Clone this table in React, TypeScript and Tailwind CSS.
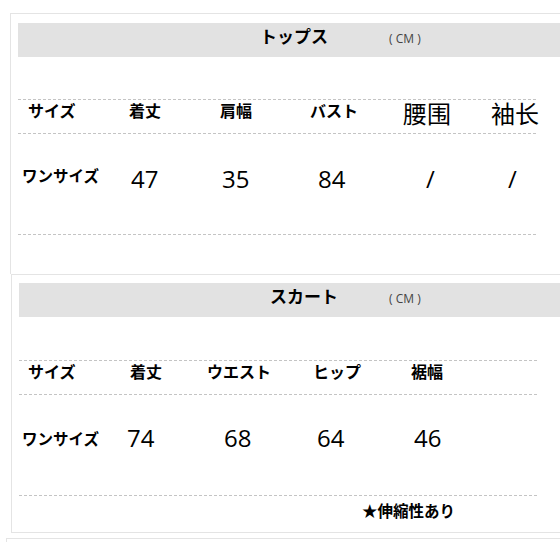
const head = "text-[16px] leading-none font-bold mb-[13px] whitespace-nowrap";
const num = "font-['Open_Sans',sans-serif] text-[24px] leading-none";
const cn = "font-['Noto_Sans_CJK_SC',sans-serif] text-[24px] leading-none font-normal mb-[7px] whitespace-nowrap";
const label = "text-[15.5px] leading-none font-bold mb-[7px] whitespace-nowrap";
const label2 = "text-[15.5px] leading-none font-bold mt-[1px] whitespace-nowrap";

function Band({ title, pad, gap }: { title: string; pad: string; gap: string }) {
  return (
    <div className={`flex h-[34px] items-center bg-[#e2e2e2] ${pad}`}>
      <span className="mb-[10px] text-[17px] leading-none font-bold">{title}</span>
      <span className={`mb-[2px] font-['Open_Sans',sans-serif] text-[12px] leading-none text-[#444] ${gap}`}>
        ( CM )
      </span>
    </div>
  );
}

export default function App() {
  return (
    <div className="h-[542px] w-[560px] overflow-hidden bg-white pt-[13px] font-['Noto_Sans_CJK_JP',sans-serif] text-black">
      {/* tops */}
      <section className="ml-[10px] h-[261px] w-[600px] border-l border-t border-[#e4e4e4]">
        <div className="ml-[7px] mt-[9px]">
          <Band title="トップス" pad="pl-[242px]" gap="ml-[61px]" />
        </div>
        <div className="ml-[7px] mt-[42px] w-[518px]">
          <div className="flex h-[35px] items-center border-y border-dashed border-[#c4c4c4]">
            <div className="w-[111px] shrink-0 pl-[10px]"><div className={head}>サイズ</div></div>
            <div className="w-[91px] shrink-0"><div className={head}>着丈</div></div>
            <div className="w-[90px] shrink-0"><div className={head}>肩幅</div></div>
            <div className="w-[93px] shrink-0"><div className={head}>バスト</div></div>
            <div className="w-[88px] shrink-0"><div className={cn}>腰围</div></div>
            <div className="flex-1"><div className={cn}>袖长</div></div>
          </div>
          <div className="h-[101px] border-b border-dashed border-[#c4c4c4] pt-[27px]">
            <div className="flex h-[36px] items-center">
              <div className="w-[113px] shrink-0 pl-[4px]"><div className={label}>ワンサイズ</div></div>
              <div className="w-[91px] shrink-0"><div className={num}>47</div></div>
              <div className="w-[96px] shrink-0"><div className={num}>35</div></div>
              <div className="w-[108px] shrink-0"><div className={num}>84</div></div>
              <div className="w-[82px] shrink-0"><div className={num}>/</div></div>
              <div className="flex-1"><div className={num}>/</div></div>
            </div>
          </div>
        </div>
      </section>

      {/* skirt */}
      <section className="ml-[11px] h-[259px] w-[600px] border-b border-l border-t border-[#e4e4e4]">
        <div className="ml-[7px] mt-[8px]">
          <Band title="スカート" pad="pl-[251px]" gap="ml-[51px]" />
        </div>
        <div className="ml-[7px] mt-[43px] w-[518px]">
          <div className="flex h-[35px] items-center border-y border-dashed border-[#c4c4c4]">
            <div className="w-[111px] shrink-0 pl-[9px]"><div className={head}>サイズ</div></div>
            <div className="w-[77px] shrink-0"><div className={head}>着丈</div></div>
            <div className="w-[106px] shrink-0"><div className={head}>ウエスト</div></div>
            <div className="w-[98px] shrink-0"><div className={head}>ヒップ</div></div>
            <div className="flex-1"><div className={head}>裾幅</div></div>
          </div>
          <div className="h-[101px] border-b border-dashed border-[#c4c4c4] pt-[25px]">
            <div className="flex h-[36px] items-center">
              <div className="w-[108px] shrink-0 pl-[3px]"><div className={label2}>ワンサイズ</div></div>
              <div className="w-[97px] shrink-0"><div className={num}>74</div></div>
              <div className="w-[93px] shrink-0"><div className={num}>68</div></div>
              <div className="w-[97px] shrink-0"><div className={num}>64</div></div>
              <div className="flex-1"><div className={num}>46</div></div>
            </div>
          </div>
          <div className="pl-[343px] pt-[7px] text-[15.5px] leading-none font-bold">★伸縮性あり</div>
        </div>
      </section>

      <div className="ml-[6px] mt-[5px] h-[20px] w-[600px] border-l border-t border-[#e4e4e4]" />
    </div>
  );
}
